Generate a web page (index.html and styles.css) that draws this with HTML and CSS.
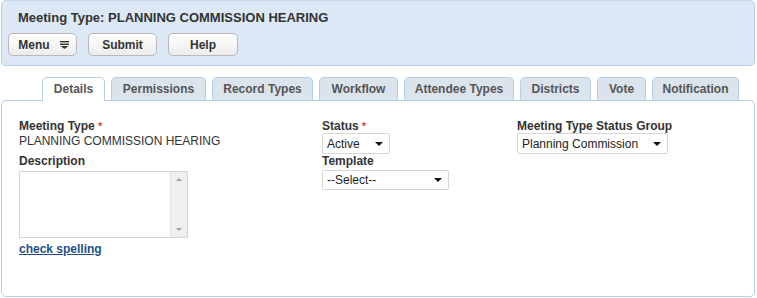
FILE: index.html
```html
<!DOCTYPE html>
<html lang="en">
<head>
    <meta charset="UTF-8">
    <title>Meeting Type</title>
    <link rel="stylesheet" href="styles.css">
</head>
<body>
    <div class="page-header">
        <h1>Meeting Type: PLANNING COMMISSION HEARING</h1>
        <div class="actions">
            <button type="button" class="btn btn-menu">Menu <span class="menu-icon">
                <svg width="9" height="8" viewBox="0 0 9 8"><rect x="0" y="0" width="9" height="1.4" fill="#333"/><rect x="0" y="2.6" width="9" height="1.4" fill="#333"/><path d="M0.5 5 L8.5 5 L4.5 8 Z" fill="#333"/></svg>
            </span></button>
            <button type="button" class="btn btn-submit">Submit</button>
            <button type="button" class="btn btn-help">Help</button>
        </div>
    </div>

    <ul class="tabs">
        <li class="tab active">Details</li>
        <li class="tab">Permissions</li>
        <li class="tab">Record Types</li>
        <li class="tab">Workflow</li>
        <li class="tab">Attendee Types</li>
        <li class="tab">Districts</li>
        <li class="tab">Vote</li>
        <li class="tab">Notification</li>
    </ul>

    <div class="panel">
        <div class="col col-1">
            <div class="field">
                <label>Meeting Type <span class="req">*</span></label>
                <div class="value">PLANNING COMMISSION HEARING</div>
            </div>
            <div class="field">
                <label>Description</label>
                <div class="textarea">
                    <div class="scrollbar">
                        <span class="arrow up"></span>
                        <span class="arrow down"></span>
                    </div>
                </div>
                <a href="#" class="spell">check spelling</a>
            </div>
        </div>
        <div class="col col-2">
            <div class="field">
                <label>Status <span class="req">*</span></label>
                <div class="select sel-status">Active<span class="caret"></span></div>
            </div>
            <div class="field">
                <label>Template</label>
                <div class="select sel-template">--Select--<span class="caret"></span></div>
            </div>
        </div>
        <div class="col col-3">
            <div class="field">
                <label>Meeting Type Status Group</label>
                <div class="select sel-group">Planning Commission<span class="caret"></span></div>
            </div>
        </div>
    </div>
</body>
</html>
```

FILE: styles.css
```css
body {
    margin: 0;
    padding: 0 2px 0 1px;
    font-family: "Liberation Sans", Arial, sans-serif;
    font-size: 12px;
    color: #333;
    background-color: white;
}
.page-header {
    background-color: #dce8f5;
    border: 1px solid #b4cfe9;
    border-top-color: #c4d9ee;
    border-radius: 5px;
    height: 66px;
    box-sizing: border-box;
    padding: 9px 6px 0 6px;
}
.page-header h1 {
    margin: 0 0 0 10px;
    font-size: 13px;
    font-weight: bold;
    color: #333;
    line-height: 16px;
}
.actions {
    display: flex;
    gap: 11px;
    margin-top: 7px;
}
.btn {
    font-family: inherit;
    font-size: 12px;
    font-weight: bold;
    color: #333;
    height: 23px;
    border: 1px solid #b8b8b8;
    border-radius: 5px;
    background: linear-gradient(#ffffff, #ececec);
    padding: 0;
    display: flex;
    align-items: center;
    justify-content: center;
}
.btn-menu { width: 69px; gap: 10px; padding-left: 2px; }
.btn-submit { width: 69px; }
.btn-help { width: 70px; }
.menu-icon { display: flex; }

.tabs {
    list-style: none;
    margin: 11px 0 0 0;
    padding: 0 0 0 41px;
    display: flex;
    gap: 6px;
    position: relative;
    z-index: 1;
}
.tab {
    height: 23px;
    box-sizing: border-box;
    padding: 0;
    text-align: center;
    background-color: #dbe3ed;
    border: 1px solid #b6cfe8;
    border-bottom: none;
    border-radius: 5px 5px 0 0;
    font-weight: bold;
    color: #555;
    line-height: 23px;
}
.tab:nth-child(1) { width: 63px; }
.tab:nth-child(2) { width: 95px; }
.tab:nth-child(3) { width: 101px; }
.tab:nth-child(4) { width: 79px; }
.tab:nth-child(5) { width: 110px; }
.tab:nth-child(6) { width: 71px; }
.tab:nth-child(7) { width: 49px; }
.tab:nth-child(8) { width: 87px; }
.tab.active {
    background-color: white;
    height: 24px;
    margin-bottom: -1px;
}

.panel {
    border: 1px solid #b4cfe9;
    border-radius: 5px;
    height: 197px;
    box-sizing: border-box;
    display: flex;
    padding: 18px 0 0 17px;
}
.col-1 { width: 303px; }
.col-2 { width: 195px; }
.field label {
    display: block;
    font-weight: bold;
    line-height: 15px;
}
.req {
    color: #e03030;
    font-size: 10px;
    vertical-align: top;
}
.value {
    line-height: 15px;
    margin-bottom: 5px;
}
.textarea {
    width: 169px;
    height: 67px;
    box-sizing: border-box;
    border: 1px solid #d4d4d4;
    margin-top: 2px;
    display: flex;
    justify-content: flex-end;
}
.scrollbar {
    width: 16px;
    background-color: #efefef;
    border-left: 1px solid #e4e4e4;
    display: flex;
    flex-direction: column;
    justify-content: space-between;
    align-items: center;
    padding: 6px 0;
}
.arrow {
    width: 0;
    height: 0;
    border-left: 3px solid transparent;
    border-right: 3px solid transparent;
}
.arrow.up { border-bottom: 3px solid #a0a0a0; }
.arrow.down { border-top: 3px solid #a0a0a0; }
.spell {
    display: inline-block;
    margin-top: 4px;
    line-height: 15px;
    font-weight: bold;
    color: #1d4f86;
    text-decoration: underline;
}
.select {
    box-sizing: border-box;
    height: 21px;
    border: 1px solid #d6d6d6;
    border-radius: 2px;
    padding: 0 6px 0 4px;
    display: flex;
    align-items: center;
    justify-content: space-between;
    font-size: 12px;
    color: #222;
}
.caret {
    width: 0;
    height: 0;
    border-left: 4px solid transparent;
    border-right: 4px solid transparent;
    border-top: 4px solid #111;
}
.sel-status, .sel-group { margin-top: -1px; }
.sel-status { width: 68px; }
.sel-template { width: 127px; height: 20px; margin-top: 1px; }
.sel-group { width: 151px; }
```
